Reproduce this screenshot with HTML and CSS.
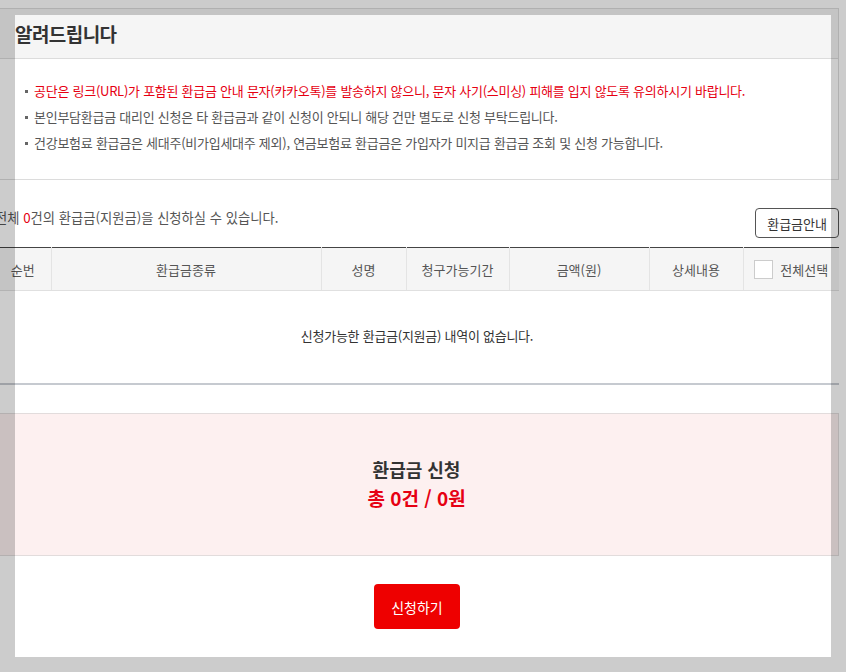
FILE: index.html
```html
<!doctype html>
<html lang="ko">
  <head>
    <meta charset="UTF-8" />
    <meta name="viewport" content="width=device-width, initial-scale=1.0" />
    <title>환급금 신청</title>
    <link rel="stylesheet" href="styles.css">
  </head>
  <body>
    <main class="content">
      <section class="aviso">
        <h2 class="aviso-titulo">알려드립니다</h2>
        <ul class="aviso-lista">
          <li class="rojo">공단은 링크(URL)가 포함된 환급금 안내 문자(카카오톡)를 발송하지 않으니, 문자 사기(스미싱) 피해를 입지 않도록 유의하시기 바랍니다.</li>
          <li>본인부담환급금 대리인 신청은 타 환급금과 같이 신청이 안되니 해당 건만 별도로 신청 부탁드립니다.</li>
          <li>건강보험료 환급금은 세대주(비가입세대주 제외), 연금보험료 환급금은 가입자가 미지급 환급금 조회 및 신청 가능합니다.</li>
        </ul>
      </section>

      <div class="resumen">
        <p>전체 <span class="rojo">0</span>건의 환급금(지원금)을 신청하실 수 있습니다.</p>
        <button class="guia-btn">환급금안내</button>
      </div>

      <table class="tabla">
        <colgroup>
          <col style="width: 56px" />
          <col style="width: 270px" />
          <col style="width: 85px" />
          <col style="width: 103px" />
          <col style="width: 140px" />
          <col style="width: 94px" />
          <col />
        </colgroup>
        <thead>
          <tr>
            <th>순번</th>
            <th>환급금종류</th>
            <th>성명</th>
            <th>청구가능기간</th>
            <th>금액(원)</th>
            <th>상세내용</th>
            <th>
              <label class="todos"><span class="check"></span>전체선택</label>
            </th>
          </tr>
        </thead>
        <tbody>
          <tr>
            <td colspan="7" class="vacio">신청가능한 환급금(지원금) 내역이 없습니다.</td>
          </tr>
        </tbody>
      </table>

      <div class="total">
        <strong>환급금 신청</strong>
        <span class="rojo">총 0건 / 0원</span>
      </div>

      <div class="enviar">
        <button class="enviar-btn">신청하기</button>
      </div>
    </main>
    <div class="marco"></div>
  </body>
</html>
```

FILE: styles.css
```css
body {
  font-family: "Noto Sans CJK KR", "Noto Sans", sans-serif;
  background-color: #fff;
  margin: 0;
  color: #555;
  font-size: 13px;
  overflow: hidden;
}

.content {
  width: 844px;
  margin: 8px 0 0 -5px;
}

.rojo {
  color: #e60012;
}

.aviso {
  border: 1px solid #dcdcdc;
  border-left: none;
}

.aviso-titulo {
  margin: 0;
  height: 49px;
  line-height: 49px;
  padding-left: 20px;
  background-color: #f5f5f5;
  border-bottom: 1px solid #dcdcdc;
  font-size: 19px;
  letter-spacing: -0.03em;
  color: #333;
}

.aviso-lista {
  list-style: none;
  margin: 0;
  padding: 19px 0 23px 30px;
  letter-spacing: -0.02em;
}

.aviso-lista li {
  position: relative;
  line-height: 26px;
  padding-left: 9px;
}

.aviso-lista li::before {
  content: "";
  position: absolute;
  left: 0;
  top: 12px;
  width: 3px;
  height: 3px;
  background-color: #666;
}

.resumen {
  display: flex;
  justify-content: space-between;
  align-items: flex-start;
  margin-top: 28px;
  height: 39px;
}

.resumen p {
  margin: 0;
  font-size: 13.3px;
  line-height: 19px;
}

.guia-btn {
  font-family: inherit;
  font-size: 13px;
  color: #333;
  background-color: #fff;
  border: 1px solid #555;
  border-radius: 4px;
  height: 30px;
  padding: 0 11px;
}

.tabla {
  width: 100%;
  border-collapse: collapse;
  table-layout: fixed;
  border-top: 1px solid #444;
  border-bottom: 2px solid #c6cad0;
}

.tabla th {
  height: 42px;
  padding: 0;
  background-color: #f5f5f5;
  border-bottom: 1px solid #e0e0e0;
  border-left: 1px solid #e4e4e4;
  font-weight: normal;
  color: #555;
}

.tabla th:first-child {
  border-left: none;
}

.todos {
  display: flex;
  align-items: center;
  justify-content: center;
  gap: 7px;
}

.check {
  width: 17px;
  height: 17px;
  background-color: #fff;
  border: 1px solid #ccc;
}

.vacio {
  height: 89px;
  padding: 0 0 3px;
  text-align: center;
  color: #333;
  letter-spacing: -0.02em;
}

.total {
  display: flex;
  flex-direction: column;
  align-items: center;
  justify-content: center;
  gap: 2px;
  margin-top: 28px;
  height: 138px;
  padding-bottom: 3px;
  background-color: #fdf0f0;
  border: 1px solid #e2dcdc;
  border-left: none;
}

.total strong {
  font-size: 18px;
  color: #333;
}

.total .rojo {
  font-size: 19px;
  font-weight: bold;
}

.enviar {
  display: flex;
  justify-content: center;
  padding-top: 28px;
}

.enviar-btn {
  font-family: inherit;
  font-size: 14px;
  color: #fff;
  background-color: #ee0000;
  border: none;
  border-radius: 4px;
  width: 86px;
  height: 45px;
}

/* mascara gris alrededor del panel */
.marco {
  position: absolute;
  left: 15px;
  top: 15px;
  width: 816px;
  height: 642px;
  box-shadow: 0 0 0 1000px rgba(0, 0, 0, 0.2);
  pointer-events: none;
}
```
